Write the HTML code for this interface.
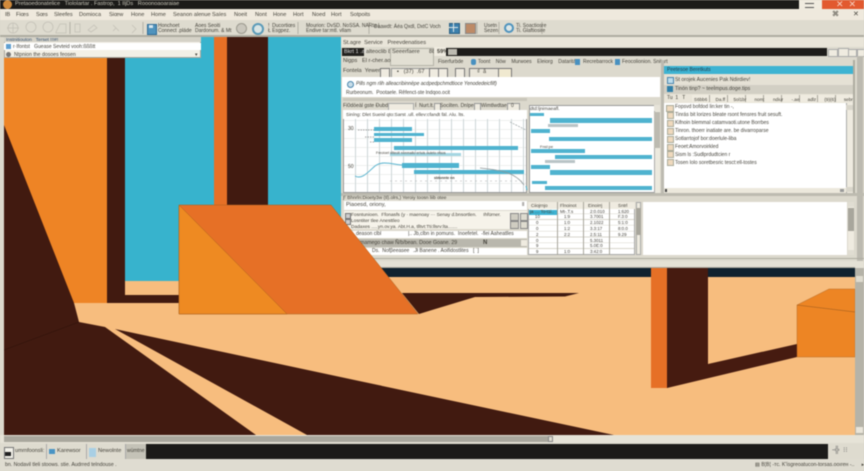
<!DOCTYPE html>
<html><head><meta charset="utf-8"><style>
html,body{margin:0;padding:0;background:#dcd9cd}
#r{position:relative;width:864px;height:471px;overflow:hidden;font-family:"Liberation Sans",sans-serif;color:#46443c;filter:blur(.4px)}
.a,.t{position:absolute}
.t{white-space:nowrap;font-size:5.6px;line-height:7px}
svg{position:absolute;left:0;top:0}
</style></head><body><div id="r">
<svg width="864" height="471" viewBox="0 0 864 471">
<rect width="864" height="471" fill="#dcd9cd"/>
<rect x="4" y="37" width="851" height="398" fill="#f7bd7e"/>
<rect x="4" y="37" width="104" height="266" fill="#ee8425"/>
<rect x="107" y="37" width="18" height="266" fill="#411a10"/>
<rect x="125" y="37" width="216" height="244" fill="#37b3cd"/>
<rect x="125" y="295" width="60" height="8" fill="#411a10"/>
<rect x="214" y="37" width="13" height="170" fill="#e67026"/>
<rect x="227" y="37" width="41" height="170" fill="#411a10"/>
<rect x="341" y="268" width="514" height="9" fill="#10222f"/>
<polygon points="4,125 74,303 79,322 105,327 256,435 4,435" fill="#411a10"/>
<line x1="4" y1="350" x2="79" y2="322" stroke="#2c1009" stroke-width=".5"/>
<polygon points="115,329 432,396.5 614,435 307,435" fill="#411a10"/>
<polygon points="402,293 579,293 565,296.5 475,297 432,310 419,314" fill="#411a10"/>
<rect x="651" y="268" width="16" height="120" fill="#e67026"/>
<polygon points="667,268 708,268 708,364 797,344 797,357 667,388" fill="#461b10"/>
<polygon points="797,305 829,289 855,289 855,357 797,357" fill="#ed8524" stroke="#a9601f" stroke-width=".4"/>
<line x1="797" y1="305" x2="855" y2="312" stroke="#9a5a20" stroke-width=".6"/>
</svg>

<!-- title bar -->
<div class="a" style="left:0;top:0;width:864px;height:9px;background:#1c1b19"></div>
<div class="a" style="left:3px;top:0;width:9px;height:9px;border-radius:50%;background:#d08a3c"></div>
<div class="t" style="left:15px;top:1px;color:#c9c6ba">Pretaoedonatelice &nbsp; Tiololartar . Fastrop, &nbsp;1 IljDs &nbsp; Rooonoaoaraiae</div>
<div class="a" style="left:799px;top:0;width:23px;height:9px;background:#f0ebdf"></div>
<div class="a" style="left:805px;top:3px;width:9px;height:3px;border-top:1px solid #555;border-bottom:1px solid #555"></div>
<div class="a" style="left:822px;top:0;width:42px;height:9px;background:#e2592f"></div>
<div class="t" style="left:836px;top:0;color:#f6d0c0;font-size:9px;line-height:9px">✕ &nbsp;✕</div>

<!-- menu -->
<div class="a" style="left:0;top:9px;width:864px;height:11px;background:#efe9dd"></div>
<div class="t" style="top:11.5px;left:5px">IB</div><div class="t" style="top:11.5px;left:16px">Fiœs</div><div class="t" style="top:11.5px;left:36px">Sœs</div><div class="t" style="top:11.5px;left:54px">Sleefes</div><div class="t" style="top:11.5px;left:79px">Domioca</div><div class="t" style="top:11.5px;left:109px">Siœw</div><div class="t" style="top:11.5px;left:131px">Hone</div><div class="t" style="top:11.5px;left:151px">Home</div><div class="t" style="top:11.5px;left:173px">Seanon alenue</div><div class="t" style="top:11.5px;left:212px">Saíes</div><div class="t" style="top:11.5px;left:234px">Noeit</div><div class="t" style="top:11.5px;left:255px">Nont</div><div class="t" style="top:11.5px;left:273px">Hone</div><div class="t" style="top:11.5px;left:293px">Hort</div><div class="t" style="top:11.5px;left:312px">Noed</div><div class="t" style="top:11.5px;left:331px">Hort</div><div class="t" style="top:11.5px;left:350px">Sotpoits</div>
<div class="t" style="left:832px;top:11px;font-size:7px">⌘</div><div class="t" style="left:853px;top:11px;font-size:7px">✕</div>

<!-- toolbar -->
<div class="a" style="left:0;top:20px;width:864px;height:15px;background:#dedbcf"></div>
<div class="a" style="left:0;top:35px;width:864px;height:2px;background:#aeaca1"></div>
<svg width="864" height="40" viewBox="0 0 864 40" fill="none" stroke="#c4c1b7" stroke-width=".8">
<circle cx="13" cy="28" r="5"/><path d="M7 28h12M13 23v10"/><circle cx="31" cy="27" r="5"/><circle cx="48" cy="27" r="5"/><path d="M56 32l4-8h6v9h-10z"/><rect x="75" y="24" width="5" height="8"/><path d="M88 30l6-5 3 3-6 4z"/><path d="M113 25l6 6M113 31l3-3"/><path d="M132 25l4 4-4 4"/>
<path d="M70 22v12M143 22v12M298 22v12M369 22v12M477 22v12M499 22v12M542 22v12" stroke="#a8a59a"/>
</svg>
<div class="a" style="left:147px;top:24px;width:8px;height:9px;background:#4f93bd;border:.5px solid #2e6c99"></div>
<div class="a" style="left:149px;top:25px;width:4px;height:3px;background:#d6e6ee"></div>
<div class="t" style="left:158px;top:22.5px;font-size:5px">Honchoet</div><div class="t" style="left:158px;top:27.5px;font-size:5px">Connect .pláde</div>
<div class="t" style="left:195px;top:22.5px;font-size:5px">Aoes Seoiti</div><div class="t" style="left:195px;top:27.5px;font-size:5px">Dardonum. &amp; Mt</div>
<div class="a" style="left:236px;top:23px;width:9px;height:9px;border-radius:50%;background:#c9c6bc;border:1px solid #9c9a90"></div>
<div class="a" style="left:252px;top:23px;width:8px;height:8px;border-radius:50%;background:#d8e4e4;border:2px solid #5a9ab8"></div>
<div class="t" style="left:268px;top:22.5px;font-size:5px">! &nbsp;Ducortiœs</div><div class="t" style="left:268px;top:27.5px;font-size:5px">Ł Esgpez.</div>
<div class="t" style="left:306px;top:22.5px;font-size:5px">Mourion: DvSD. NoSSA. NARta |</div><div class="t" style="left:306px;top:27.5px;font-size:5px">Endive tar:mtl. vllam</div>
<div class="t" style="left:374px;top:24px;font-size:5px">Daawdt: Áéa Qxdl, DxtC Voch</div>
<div class="a" style="left:449px;top:23px;width:9px;height:9px;background:#3b80ad;border:.5px solid #2d5f80"></div>
<div class="a" style="left:453px;top:23px;width:1px;height:9px;background:#e0e8e8"></div><div class="a" style="left:449px;top:27px;width:9px;height:1px;background:#e0e8e8"></div>
<div class="a" style="left:465px;top:23px;width:9px;height:9px;background:#bd8a66;border:.5px solid #888"></div>
<div class="t" style="left:484px;top:22.5px;font-size:5px">Usetn</div><div class="t" style="left:484px;top:27.5px;font-size:5px">Sezen</div>
<div class="a" style="left:504px;top:23px;width:6px;height:6px;border-radius:50%;background:#dce6e6;border:2px solid #4f93bd"></div>
<div class="t" style="left:516px;top:22.5px;font-size:5px">Ti. Soactiosre</div><div class="t" style="left:516px;top:27.5px;font-size:5px">Ti. Glaftiosire</div>

<!-- popup -->
<div class="a" style="left:4px;top:37px;width:197px;height:21px;background:#f3f0e6;border:.5px solid #a9a79d;box-sizing:border-box"></div>
<div class="a" style="left:4px;top:37px;width:197px;height:5px;background:#d5d2c7"></div>
<div class="t" style="left:6px;top:36.5px;font-size:4.8px;color:#334f70">Instnitiouton &nbsp; Terset !!!#!</div>
<div class="a" style="left:4px;top:43px;width:197px;height:7px;background:#fff"></div>
<div class="a" style="left:6px;top:44px;width:5px;height:5px;background:#5f9fd0"></div>
<div class="t" style="left:13px;top:43.5px;font-size:5px">r·Ifontst &nbsp; Guease Sevteid vooh:ßßßtt</div>
<div class="a" style="left:6px;top:52px;width:5px;height:5px;border-radius:50%;background:#777"></div>
<div class="t" style="left:14px;top:51.5px;font-size:5.2px">Ntpnion the dosoes feosen</div>
<div class="t" style="left:195px;top:52px;font-size:5px">▾</div>

<!-- main window -->
<div class="a" style="left:341px;top:37px;width:523px;height:231px;background:#dcd9cd"></div>
<div class="a" style="left:341px;top:37px;width:523px;height:10px;background:#e9e5d9"></div>
<div class="t" style="left:343px;top:40px">St.agre &nbsp;Service &nbsp; Preevdenatises</div>
<div class="a" style="left:342px;top:48px;width:22px;height:8px;background:#22211e"></div>
<div class="t" style="left:344px;top:49px;color:#ddd">Bkrt 1 .at</div>
<div class="t" style="left:366px;top:49px">alteoclib 8s</div>
<div class="a" style="left:390px;top:48px;width:44px;height:18px;background:#e2dfd3;border:.5px solid #b5b3a8;box-sizing:border-box"></div>
<div class="t" style="left:392px;top:49px">Seeerfaere &nbsp; &nbsp; &nbsp;88</div>
<div class="a" style="left:434px;top:47px;width:12px;height:9px;background:#efebe0"></div>
<div class="t" style="left:437px;top:48.5px;font-weight:bold">59%</div>
<div class="a" style="left:446px;top:48px;width:381px;height:8px;background:#1d1c1a"></div>
<div class="a" style="left:448px;top:49px;width:9px;height:6px;background:#bdbbb1"></div>
<div class="a" style="left:828px;top:49px;width:8px;height:6px;background:#efebe0;border:.5px solid #aaa"></div>
<div class="a" style="left:838px;top:48px;width:9px;height:7px;background:#efebe0;border:.5px solid #aaa"></div>
<div class="a" style="left:848px;top:49px;width:7px;height:6px;background:#efebe0;border:.5px solid #aaa"></div>
<div class="a" style="left:857px;top:49px;width:6px;height:6px;background:#efebe0;border:.5px solid #aaa"></div>
<div class="a" style="left:857px;top:56px;width:6px;height:212px;background:#bcbab0"></div>

<div class="t" style="left:343px;top:58px">Nigps &nbsp; El r-cher.ao</div>
<div class="t" style="left:438px;top:59px;font-size:5px">Fiserfurbde</div>
<div class="a" style="left:471px;top:59px;width:5px;height:6px;border-radius:2px;background:#4890c0"></div>
<div class="t" style="left:478px;top:59px;font-size:5px">Toont &nbsp; &nbsp;Nöw &nbsp; &nbsp;Murwoes &nbsp; &nbsp;Eleiorg &nbsp; &nbsp;Dataritán</div>
<div class="a" style="left:575px;top:59px;width:5px;height:6px;background:#4890c0"></div>
<div class="t" style="left:583px;top:59px;font-size:5px">Recrebarrock</div>
<div class="a" style="left:615px;top:59px;width:5px;height:6px;background:#4890c0"></div>
<div class="t" style="left:622px;top:59px;font-size:5px">Feocolionion. Snitart</div>

<div class="t" style="left:343px;top:68px">Fontela &nbsp;Yewen</div>
<div class="a" style="left:380px;top:68px;width:8px;height:8px;background:#efebe0;border:.5px solid #777"></div>
<div class="a" style="left:391px;top:68px;width:38px;height:8px;background:#efebe0;border:.5px solid #999"></div>
<div class="t" style="left:397px;top:68.5px">▪ &nbsp; (37) &nbsp;.67</div>
<div class="a" style="left:429px;top:68px;width:8px;height:8px;background:#efebe0;border:.5px solid #777"></div>
<div class="a" style="left:438px;top:68px;width:8px;height:8px;background:#efebe0;border:.5px solid #777"></div>
<div class="a" style="left:455px;top:68px;width:8px;height:8px;background:#efebe0;border:.5px solid #777"></div>
<div class="a" style="left:469px;top:68px;width:28px;height:8px;background:#e9e5d9;border:.5px solid #777"></div>
<div class="t" style="left:477px;top:68.5px">₫ &nbsp;ã</div>
<div class="a" style="left:498px;top:68px;width:12px;height:8px;background:#f0e9d0;border:.5px solid #777"></div>

<div class="a" style="left:342px;top:77px;width:318px;height:20px;background:#fff"></div>
<div class="a" style="left:347px;top:81px;width:5px;height:5px;border-radius:50%;background:#c8dde8;border:1px solid #4a86ae"></div>
<div class="t" style="left:356px;top:80.5px;font-size:5px;font-style:italic">Pills ngm rlih alleacribinnëpe acdpedpchmdtioce Yenodedeicfilf)</div>
<div class="t" style="left:346px;top:89.5px;font-size:5px">Rurbeonum. &nbsp;Pootaele. Rêfenct-ste lndqoo.ocit</div>

<div class="a" style="left:343px;top:98px;width:184px;height:3px;background:#c9c6bb"></div>
<div class="t" style="left:343px;top:103px;font-size:5.2px">Fi0döeàl gste Ðubd</div>
<div class="a" style="left:388px;top:103px;width:24px;height:6px;background:#efebe0;border:.5px solid #aaa"></div>
<div class="t" style="left:415px;top:103px;font-size:5px">Í &nbsp;Nurt.lt.</div>
<div class="a" style="left:434px;top:103px;width:5px;height:6px;background:#efebe0;border:.5px solid #999"></div>
<div class="t" style="left:440px;top:103px;font-size:5px">Socilten. Dnlpen</div>
<div class="a" style="left:474px;top:103px;width:5px;height:6px;background:#efebe0;border:.5px solid #999"></div>
<div class="t" style="left:481px;top:103px;font-size:5px">Wimtlwdtae</div>
<div class="a" style="left:507px;top:103px;width:11px;height:6px;background:#efebe0;border:.5px solid #999"></div>
<div class="t" style="left:511px;top:103px;font-size:5px">0</div>

<!-- chart 1 -->
<div class="a" style="left:343px;top:110px;width:184px;height:83px;background:#fff;background-image:repeating-linear-gradient(90deg,transparent 0 11px,#cdd6d8 11px 12px),repeating-linear-gradient(0deg,transparent 0 8px,#eef0ee 8px 9px);border:.5px solid #999;box-sizing:border-box"></div>
<div class="a" style="left:343px;top:110px;width:184px;height:9px;background:#fff"></div>
<div class="t" style="left:346px;top:112px;font-size:4.8px">Siníng: Dlet Sueisl qto:Sarst .ull. ellev:cfandt fäl. Alu. lts.</div>
<div class="t" style="left:348px;top:126px;font-size:5px">30</div><div class="t" style="left:348px;top:164px;font-size:5px">50</div>
<div class="a" style="left:374px;top:127px;width:38px;height:4px;background:#4fb3cf"></div>
<div class="a" style="left:374px;top:133px;width:50px;height:3px;background:#4fb3cf"></div>
<div class="a" style="left:374px;top:138px;width:38px;height:4px;background:#4fb3cf"></div>
<div class="a" style="left:394px;top:146px;width:124px;height:4px;background:#4fb3cf"></div>
<div class="a" style="left:390px;top:153px;width:71px;height:3px;background:#a5d6e2"></div>
<div class="a" style="left:402px;top:163px;width:57px;height:5px;background:#4fb3cf"></div>
<div class="a" style="left:414px;top:170px;width:110px;height:4px;background:#4fb3cf"></div>
<div class="t" style="left:376px;top:149.5px;font-size:3.6px">Freoioet stteolt nonmalto ertuis ouleto ntsos</div>
<div class="t" style="left:434px;top:175px;font-size:3.6px;font-weight:bold">sbtonnte nn</div>
<svg width="864" height="200" viewBox="0 0 864 200" fill="none">
<path d="M355 176C362 180 368 172 375 166S395 165 402 165" stroke="#5ab4cf"/>
<path d="M480 168C500 170 515 172 524 185" stroke="#8d9698" stroke-width=".7"/>
<path d="M510 122L526 130" stroke="#8d9698" stroke-width=".6" stroke-dasharray="2 1"/>
<path d="M390 181H525" stroke="#aaa" stroke-width=".6" stroke-dasharray="2 3"/>
<path d="M358 130H374M365 137H374M370 142H374" stroke="#555" stroke-width=".6" stroke-dasharray="1.5 1"/>
<path d="M526 186l1 4" stroke="#4fb3cf"/>
</svg>

<!-- chart 2 -->
<div class="a" style="left:529px;top:105px;width:131px;height:88px;background:#fff;border:.5px solid #999;box-sizing:border-box"></div>
<div class="t" style="left:530px;top:105.5px;font-size:4.8px">dtd:ljnimaeafl.</div>
<div class="a" style="left:530px;top:113px;width:14px;height:3px;background:#4fb3cf"></div>
<div class="a" style="left:550px;top:118px;width:102px;height:5px;background:#4fb3cf"></div>
<div class="a" style="left:531px;top:129px;width:19px;height:4px;background:#4fb3cf"></div>
<div class="a" style="left:549px;top:137px;width:103px;height:4px;background:#4fb3cf"></div>
<div class="a" style="left:531px;top:149px;width:54px;height:4px;background:#4fb3cf"></div>
<div class="a" style="left:555px;top:155px;width:97px;height:4px;background:#4fb3cf"></div>
<div class="a" style="left:531px;top:165px;width:19px;height:4px;background:#4fb3cf"></div>
<div class="a" style="left:550px;top:170px;width:102px;height:5px;background:#4fb3cf"></div>
<div class="a" style="left:532px;top:181px;width:15px;height:3px;background:#4fb3cf"></div>
<div class="a" style="left:545px;top:186px;width:107px;height:4px;background:#4fb3cf"></div>
<div class="a" style="left:548px;top:124px;width:30px;height:3px;background:#b9c4c6"></div>
<div class="a" style="left:545px;top:160px;width:30px;height:3px;background:#b9c4c6"></div>
<div class="t" style="left:540px;top:143px;font-size:4px">Fnsl:pe</div>
<div class="a" style="left:654px;top:105px;width:6px;height:88px;background:#ece9de;border-left:.5px solid #aaa;box-sizing:border-box"></div>
<div class="a" style="left:654px;top:112px;width:6px;height:36px;background:#bcbab0"></div>
<div class="a" style="left:654px;top:105px;width:6px;height:6px;background:#e6e3d8"></div>

<!-- right panel -->
<div class="a" style="left:661px;top:60px;width:3px;height:133px;background:#bcbab0"></div>
<div class="a" style="left:664px;top:66px;width:191px;height:8px;background:#3db3d2"></div>
<div class="t" style="left:667px;top:67px;font-size:5px;color:#233b4a">Peetesoe Beretkuts</div>
<div class="a" style="left:664px;top:74px;width:191px;height:20px;background:#e5e1d5"></div>
<div class="a" style="left:667px;top:77px;width:5px;height:5px;background:#bcdcec;border:.5px solid #4a86ae"></div>
<div class="t" style="left:675px;top:77px;font-size:5.2px">St orojek Aucenies Pak Ndirdiev!</div>
<div class="a" style="left:664px;top:85px;width:191px;height:9px;background:#d2cfc4"></div>
<div class="a" style="left:667px;top:86px;width:6px;height:6px;background:#2f7fa8"></div>
<div class="t" style="left:675px;top:86px;font-size:5.2px">Tinón tinp? ~ teeÌmpus.doge.tips</div>
<div class="a" style="left:664px;top:94px;width:191px;height:9px;background:#e9e5d9"></div>
<div class="t" style="left:667px;top:95px;font-size:5px">Tu &nbsp;1 &nbsp; T</div>
<div class="a" style="left:692px;top:95px;width:163px;height:7px;background-image:repeating-linear-gradient(90deg,#efebe0 0 17px,#a8a69c 17px 18px)"></div>
<div class="t" style="left:694px;top:95.5px;font-size:4.6px;word-spacing:7px">S6bb6 Da.ff 5ol1br nom: ndiur -.ae adlz (9)(6) sebr</div>
<div class="a" style="left:664px;top:103px;width:182px;height:85px;background:#fff"></div>
<div class="a" style="left:664px;top:188px;width:182px;height:5px;background:#ece8dc"></div>
<div class="a" style="left:665px;top:189px;width:2px;height:3px;background:#444"></div>
<div class="a" style="left:840px;top:189px;width:4px;height:3px;background:#999"></div>
<div class="a" style="left:846px;top:103px;width:7px;height:90px;background:#efebe0;border-left:.5px solid #aaa;box-sizing:border-box"></div>
<div class="a" style="left:846px;top:105px;width:7px;height:5px;background:#d8d5ca"></div>
<div class="a" style="left:846px;top:187px;width:7px;height:5px;background:#d8d5ca"></div>
<div class="a" style="left:853px;top:60px;width:2px;height:133px;background:#aeaca1"></div>
<div class="a" style="left:666px;top:105px;width:6px;height:5px;background:#efd9bd;border:.5px solid #aa9"></div>
<div class="a" style="left:667px;top:112px;width:5px;height:5px;background:#efd9bd;border:.5px solid #aa9"></div>
<div class="a" style="left:667px;top:120px;width:5px;height:5px;background:#efd9bd;border:.5px solid #aa9"></div>
<div class="a" style="left:667px;top:128px;width:5px;height:5px;background:#efd9bd;border:.5px solid #aa9"></div>
<div class="a" style="left:667px;top:136px;width:5px;height:5px;background:#efd9bd;border:.5px solid #aa9"></div>
<div class="a" style="left:667px;top:144px;width:5px;height:5px;background:#efd9bd;border:.5px solid #aa9"></div>
<div class="a" style="left:667px;top:151px;width:5px;height:5px;background:#efd9bd;border:.5px solid #aa9"></div>
<div class="a" style="left:667px;top:159px;width:5px;height:5px;background:#efd9bd;border:.5px solid #aa9"></div>
<div class="t" style="left:675px;top:104px;font-size:5px">Fopsvd bofdod lin:ker tin -,</div>
<div class="t" style="left:675px;top:112px;font-size:5px">Tinrás bit lorizes bleate rsont fensres fruit sesuft.</div>
<div class="t" style="left:675px;top:120px;font-size:5px">Kifnoin blemmal catamvaoti.utone Borrbes</div>
<div class="t" style="left:675px;top:128px;font-size:5px">Tinron. thoerr inatiate are. be divarroparse</div>
<div class="t" style="left:675px;top:136px;font-size:5px">Sotlarrtojof bor:doerlule-liba</div>
<div class="t" style="left:675px;top:143.5px;font-size:5px">Feoet:Amorvoirkled</div>
<div class="t" style="left:675px;top:151.5px;font-size:5px">Sism ls :Sudlprdudtcien r</div>
<div class="t" style="left:675px;top:159.5px;font-size:5px">Tosen lolo soretbesric tesct:ell-tostes</div>

<!-- lower panel -->
<div class="a" style="left:341px;top:193px;width:523px;height:3px;background:#bdbbb0"></div>
<div class="t" style="left:343px;top:194.5px;font-size:4.8px">Ƒ Bhnrln:Dioety3w (tl).olrs,) Yeroiy toosn liib otee</div>
<div class="a" style="left:344px;top:201px;width:183px;height:9px;background:#fff"></div>
<div class="t" style="left:346px;top:202px;font-size:5.6px">Piaoesd, oriony,</div>
<div class="t" style="left:522px;top:202px;font-size:5px">ll</div>
<div class="a" style="left:344px;top:211px;width:183px;height:18px;background:#f6f3ea"></div>
<div class="a" style="left:345px;top:213px;width:4px;height:4px;background:#ccc;border:.5px solid #777"></div>
<div class="a" style="left:345px;top:219px;width:4px;height:4px;background:#ccc;border:.5px solid #777"></div>
<div class="t" style="left:351px;top:211.5px;font-size:4.8px">Fosntunioen. &nbsp;Ffonasfs (y · maenoay ··· Senay d.bnsortlen. &nbsp; &nbsp; Ihfürner.</div>
<div class="t" style="left:351px;top:217.5px;font-size:4.8px">Losntiter tlee Anesttleo</div>
<div class="t" style="left:351px;top:223.5px;font-size:4.8px">Dadaxes .....yn.ov.ya. Abt.H.a, tlltvt:Tti:llsrv:lta.......</div>
<div class="a" style="left:510px;top:213px;width:7px;height:6px;background:#cfccc1;border:.5px solid #888"></div>
<div class="a" style="left:520px;top:213px;width:6px;height:6px;background:#dedbcf;border:.5px solid #888"></div>
<div class="a" style="left:510px;top:221px;width:7px;height:6px;background:#cfccc1;border:.5px solid #888"></div>
<div class="a" style="left:520px;top:221px;width:6px;height:6px;background:#dedbcf;border:.5px solid #888"></div>
<div class="a" style="left:344px;top:231px;width:183px;height:7px;background:#fff"></div>
<div class="t" style="left:356px;top:231px;font-size:5px">deason clbl</div>
<div class="t" style="left:408px;top:231px;font-size:5px">|.. Jb,clbn in pomuns. &nbsp;Inoefetel. &nbsp;-fiei Aaheatlles</div>
<div class="a" style="left:344px;top:239px;width:183px;height:8px;background:#b9b7ad"></div>
<div class="t" style="left:360px;top:239.5px;font-size:5.2px">mamego chaw Ñ/b/bean. Dooe Goane. 29</div>
<div class="t" style="left:483px;top:239.5px;font-size:6px;font-weight:bold">N</div>
<div class="a" style="left:521px;top:240px;width:6px;height:6px;background:#efebe0"></div>
<div class="a" style="left:344px;top:248px;width:183px;height:7px;background:#fff"></div>
<div class="t" style="left:372px;top:248px;font-size:5px">Ds. &nbsp;Nofβeeasee</div>
<div class="t" style="left:413px;top:248px;font-size:5px">.Jł Banene . Aoifidostlites</div>
<div class="t" style="left:473px;top:248px;font-size:5px">[ ˙]</div>

<!-- table -->
<div class="a" style="left:528px;top:202px;width:107px;height:53px;background:#fff;background-image:repeating-linear-gradient(0deg,transparent 0 5.1px,#d8d6cc 5.1px 5.8px);border:.5px solid #aaa;box-sizing:border-box"></div>
<div class="a" style="left:528px;top:202px;width:107px;height:7px;background:#efebe0"></div>
<div class="a" style="left:557px;top:202px;width:.7px;height:53px;background:#a8a69c"></div>
<div class="a" style="left:583px;top:202px;width:.7px;height:53px;background:#a8a69c"></div>
<div class="a" style="left:609px;top:202px;width:.7px;height:53px;background:#a8a69c"></div>
<div class="a" style="left:529px;top:210px;width:28px;height:4.5px;background:#3db3d2"></div>
<div class="t" style="left:531px;top:202.2px;font-size:4.6px">Ciiojrnjo</div><div class="t" style="left:560px;top:202.2px;font-size:4.6px">Flnoinot</div><div class="t" style="left:588px;top:202.2px;font-size:4.6px">Einoirrj</div><div class="t" style="left:618px;top:202.2px;font-size:4.6px">Sntrl</div>
<div class="t" style="left:530px;top:208.2px;font-size:4.4px">ja .... To-t1i..</div><div class="t" style="left:560px;top:208.2px;font-size:4.4px">Mt-.T.s</div><div class="t" style="left:590px;top:208.2px;font-size:4.4px">2:0.010</div><div class="t" style="left:618px;top:208.2px;font-size:4.4px">1:620</div>
<div class="t" style="left:535px;top:213.2px;font-size:4.4px">10</div><div class="t" style="left:564px;top:213.2px;font-size:4.4px">1:9</div><div class="t" style="left:590px;top:213.2px;font-size:4.4px">3.7001</div><div class="t" style="left:618px;top:213.2px;font-size:4.4px">F.3:0</div>
<div class="t" style="left:536px;top:218.5px;font-size:4.4px">0</div><div class="t" style="left:564px;top:218.5px;font-size:4.4px">1:0</div><div class="t" style="left:590px;top:218.5px;font-size:4.4px">2.1022</div><div class="t" style="left:618px;top:218.5px;font-size:4.4px">5:1:0</div>
<div class="t" style="left:536px;top:224.5px;font-size:4.4px">0</div><div class="t" style="left:564px;top:224.5px;font-size:4.4px">1:2</div><div class="t" style="left:590px;top:224.5px;font-size:4.4px">3.3:17</div><div class="t" style="left:618px;top:224.5px;font-size:4.4px">8:0.0</div>
<div class="t" style="left:536px;top:230.5px;font-size:4.4px">2</div><div class="t" style="left:564px;top:230.5px;font-size:4.4px">2:2</div><div class="t" style="left:590px;top:230.5px;font-size:4.4px">2.5:11</div><div class="t" style="left:618px;top:230.5px;font-size:4.4px">9.29</div>
<div class="t" style="left:536px;top:236.5px;font-size:4.4px">0</div><div class="t" style="left:590px;top:236.5px;font-size:4.4px">5.3011</div>
<div class="t" style="left:536px;top:242.2px;font-size:4.4px">9</div><div class="t" style="left:590px;top:242.2px;font-size:4.4px">5.0E:0</div>
<div class="t" style="left:536px;top:247.5px;font-size:4.4px">9</div><div class="t" style="left:564px;top:247.5px;font-size:4.4px">1:0</div><div class="t" style="left:590px;top:247.5px;font-size:4.4px">3:42:0</div>
<div class="a" style="left:636px;top:202px;width:5px;height:53px;background:#efebe0;border:.5px solid #aaa;box-sizing:border-box"></div>
<div class="a" style="left:636px;top:208px;width:5px;height:27px;background:#a8a69c"></div>

<!-- white panel -->
<div class="a" style="left:643px;top:202px;width:204px;height:53px;background:#fff"></div>
<div class="a" style="left:848px;top:202px;width:6px;height:53px;background:#efebe0"></div>
<div class="a" style="left:848px;top:208px;width:6px;height:23px;background:#a8a69c"></div>
<div class="a" style="left:848px;top:202px;width:6px;height:5px;background:#e0ddd2"></div>
<div class="a" style="left:848px;top:250px;width:6px;height:5px;background:#e0ddd2"></div>
<div class="a" style="left:341px;top:258px;width:523px;height:1px;background:#aeaca1"></div>
<div class="a" style="left:341px;top:261px;width:523px;height:7px;background:#e4e1d5"></div>
<div class="a" style="left:341px;top:267px;width:514px;height:1px;background:#a8a69c"></div>

<!-- orange box overlay -->
<svg width="864" height="471" viewBox="0 0 864 471">
<polygon points="179,205 331,205 418,314 179,314" fill="#e67026" stroke="#a9601f" stroke-width=".5"/>
<polygon points="179,205 287,314 179,314" fill="#ee8a22" stroke="#a9601f" stroke-width=".5"/>
</svg>

<!-- right scrollbar and bottom -->
<div class="a" style="left:855px;top:268px;width:9px;height:175px;background:#b5b3a8"></div>
<div class="a" style="left:856px;top:276px;width:7px;height:6px;background:#dedbcf"></div>
<div class="a" style="left:856px;top:427px;width:7px;height:6px;background:#e9e5d9"></div>
<div class="a" style="left:0;top:435px;width:864px;height:8px;background:#e6e3d7"></div>
<div class="a" style="left:4px;top:436px;width:546px;height:6px;background:#a9a79d"></div>
<div class="a" style="left:548px;top:436px;width:5px;height:6px;background:#dedbcf;border:.5px solid #888;box-sizing:border-box"></div>

<div class="a" style="left:0;top:443px;width:864px;height:16px;background:#dedbcf"></div>
<div class="a" style="left:146px;top:444px;width:682px;height:15px;background:#1c1b19"></div>
<div class="a" style="left:126px;top:444px;width:20px;height:15px;background:#c4c2b7"></div>
<div class="a" style="left:46px;top:444px;width:1px;height:15px;background:#aaa"></div>
<div class="a" style="left:86px;top:444px;width:1px;height:15px;background:#aaa"></div>
<div class="a" style="left:125px;top:444px;width:1px;height:15px;background:#aaa"></div>
<div class="a" style="left:4px;top:447px;width:8px;height:10px;background:#f2f0e8;border:.5px solid #777"></div>
<div class="a" style="left:5px;top:452px;width:6px;height:4px;background:#222"></div>
<div class="t" style="left:15px;top:448px;font-size:5.4px">umrnfoonsli:</div>
<div class="a" style="left:49px;top:449px;width:6px;height:5px;background:#4a94c4"></div>
<div class="t" style="left:57px;top:448px;font-size:5.6px">Karewsor</div>
<div class="a" style="left:89px;top:448px;width:7px;height:9px;background:#a9cfe4"></div>
<div class="t" style="left:98px;top:448px;font-size:5.6px">Newolnte</div>
<div class="t" style="left:127px;top:448px;font-size:5px">wümtne</div>
<div class="t" style="left:832px;top:447px;font-size:7px;color:#666">-╬ &nbsp;⁝⁝</div>

<div class="a" style="left:0;top:459px;width:864px;height:12px;background:#dfdcd1"></div>
<div class="t" style="left:5px;top:462px;font-size:5.2px">bn. Nodavil tleli stoows. stie. Audrred telndouse .</div>
<div class="t" style="left:755px;top:462px;font-size:5.2px">▤ B¦B¦ -тс. K'ïsgreoatucon-torsas.ooıreн -.. &nbsp; &nbsp; ▸</div>
</div></body></html>
